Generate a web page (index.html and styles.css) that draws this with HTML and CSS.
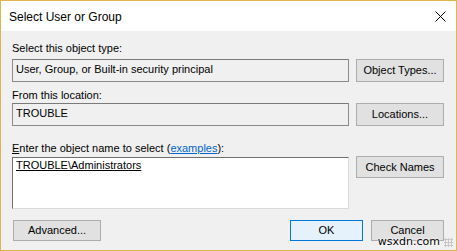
FILE: index.html
```html
<!DOCTYPE html>
<html>
<head>
<meta charset="utf-8">
<link rel="stylesheet" href="styles.css">
</head>
<body>
<div class="window">
  <div class="titlebar">
    <span class="title">Select User or Group</span>
    <span class="close"><svg width="11" height="11" viewBox="0 0 11 11"><path d="M0.5 0.5L10.5 10.5M10.5 0.5L0.5 10.5" stroke="#000" stroke-width="1" fill="none"/></svg></span>
  </div>
  <div class="content">
    <div class="label first">Select this object type:</div>
    <div class="row">
      <div class="field ro">User, Group, or Built-in security principal</div>
      <div class="btn">Object Types...</div>
    </div>
    <div class="label second">From this location:</div>
    <div class="row">
      <div class="field ro">TROUBLE</div>
      <div class="btn">Locations...</div>
    </div>
    <div class="label third"><u>E</u>nter the object name to select (<span class="link">examples</span>):</div>
    <div class="row">
      <div class="field area"><u>TROUBLE\Administrators</u></div>
      <div class="btn short">Check Names</div>
    </div>
    <div class="footer">
      <div class="btn adv">Advanced...</div>
      <div class="spacer"></div>
      <div class="btn ok">OK</div>
      <div class="btn cancel">Cancel</div>
    </div>
  </div>
  <div class="watermark">wsxdn.com</div>
  <div class="grip"></div>
</div>
</body>
</html>
```
FILE: styles.css
```css
html, body {
  margin: 0;
  padding: 0;
  background: #ffffff;
}
.window {
  position: relative;
  box-sizing: border-box;
  width: 457px;
  height: 251px;
  border: 1px solid #e0b54c;
  background: #f0f0f0;
  display: flex;
  flex-direction: column;
  font-family: "Liberation Sans", Arial, sans-serif;
  font-size: 11px;
  color: #000;
  overflow: hidden;
}
.titlebar {
  height: 30px;
  background: #ffffff;
  display: flex;
  align-items: center;
  justify-content: space-between;
  padding-left: 8px;
  padding-right: 10px;
  flex-shrink: 0;
}
.title {
  font-size: 12px;
  line-height: 14px;
  margin-top: 1px;
}
.close {
  width: 11px;
  height: 11px;
  display: block;
  margin-top: 0px;
}
.close svg { display: block; }
.content {
  display: flex;
  flex-direction: column;
  padding: 0 12px 0 11px;
}
.label {
  line-height: 13px;
  height: 13px;
  white-space: nowrap;
}
.label.first { margin-top: 11px; margin-bottom: 4px; }
.label.second { margin-top: 7px; margin-bottom: 1px; }
.label.third { margin-top: 16px; margin-bottom: 2px; }
.link {
  color: #0066cc;
  text-decoration: underline;
}
.row {
  display: flex;
  align-items: flex-start;
  gap: 7px;
}
.field {
  box-sizing: border-box;
  width: 337px;
  height: 23px;
  border: 1px solid #8a8a8a;
  border-top-color: #7a7a7a;
  padding: 3px 3px 0 3px;
  line-height: 13px;
  white-space: nowrap;
}
.field.ro { background: #f0f0f0; }
.field.area {
  height: 52px;
  background: #ffffff;
  border-color: #707070 #dadada #dadada #707070;
  padding-top: 1px;
}
.btn {
  box-sizing: border-box;
  width: 88px;
  height: 23px;
  background: #e1e1e1;
  border: 1px solid #adadad;
  display: flex;
  align-items: center;
  justify-content: center;
  line-height: 13px;
  white-space: nowrap;
}
.btn.short { height: 22px; margin-top: -1px; }
.footer {
  display: flex;
  align-items: flex-start;
  margin-top: 11px;
  gap: 8px;
  padding-left: 1px;
}
.btn.adv { height: 21px; }
.spacer { flex: 1; }
.btn.ok {
  width: 73px;
  height: 21px;
  background: #e5f1fb;
  border-color: #0078d7;
}
.btn.cancel {
  width: 73px;
  height: 21px;
}
.watermark {
  position: absolute;
  right: 16px;
  bottom: 2px;
  font-family: "DejaVu Sans", sans-serif;
  font-size: 11px;
  line-height: 12px;
  color: #000;
  text-shadow: 0 0 2px #fff, 0 0 2px #fff, 0 0 1px #fff;
}
.grip {
  position: absolute;
  right: 3px;
  bottom: 3px;
  width: 9px;
  height: 9px;
  background-image: radial-gradient(circle, #c8c8c8 1px, transparent 1.2px);
  background-size: 3px 3px;
}
```
